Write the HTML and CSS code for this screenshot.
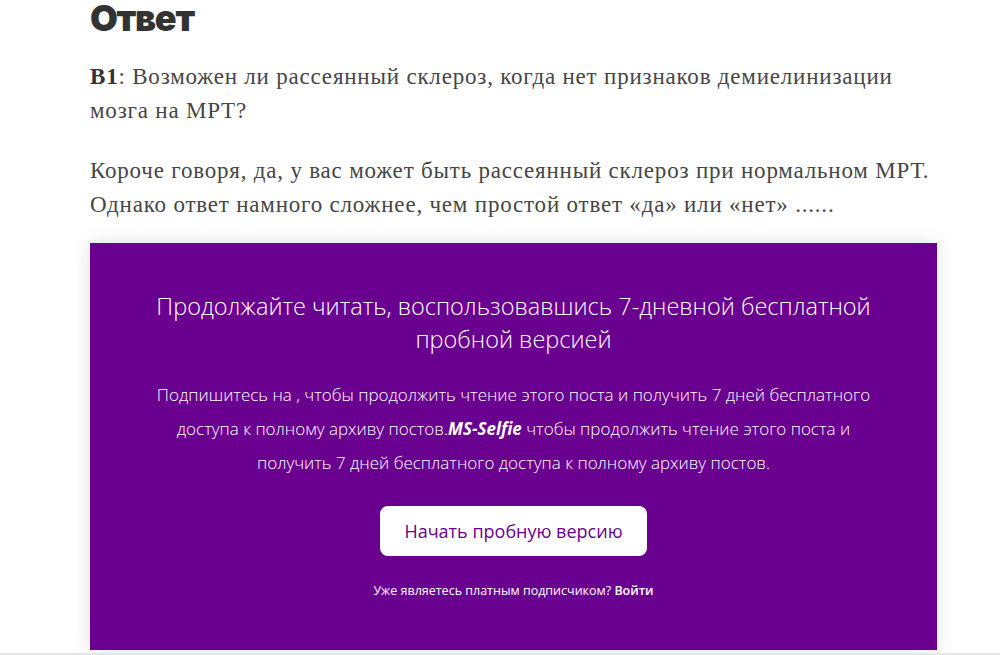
FILE: index.html
```html
<!DOCTYPE html>
<html lang="ru">
<head>
    <meta charset="UTF-8">
    <meta name="viewport" content="width=device-width, initial-scale=1.0">
    <title>Ответ</title>
    <link rel="stylesheet" href="styles.css">
</head>
<body>
    <div class="page">
        <article class="post">
            <h2>Ответ</h2>
            <p><strong>В1</strong>: Возможен ли рассеянный склероз, когда нет признаков демиелинизации мозга на МРТ?</p>
            <p class="teaser">Короче говоря, да, у вас может быть рассеянный склероз при нормальном МРТ. Однако ответ намного сложнее, чем простой ответ «да» или «нет» ......</p>
            <div class="paywall">
                <h3>Продолжайте читать, воспользовавшись 7-дневной бесплатной пробной версией</h3>
                <p class="paywall-text">Подпишитесь на , чтобы продолжить чтение этого поста и получить 7 дней бесплатного доступа к полному архиву постов.<b>MS-Selfie</b> чтобы продолжить чтение этого поста и получить 7 дней бесплатного доступа к полному архиву постов.</p>
                <a class="trial-btn" href="#">Начать пробную версию</a>
                <p class="login">Уже являетесь платным подписчиком? <a href="#">Войти</a></p>
            </div>
        </article>
    </div>
</body>
</html>
```

FILE: styles.css
```css
:root { --purple: #6a0090; --text: #464646; }
body { margin: 0; background: #fff; color: var(--text); }
.page { height: 653px; overflow: hidden; border-bottom: 2px solid #e6e6e6; }
.post { width: 847px; margin: 0 0 0 90px; font-family: "Liberation Serif", serif; font-size: 23px; letter-spacing: 0.8px; line-height: 34px; }
.post h2 { margin: -7px 0 0; font-family: Inter, sans-serif; font-weight: 900; font-size: 36px; letter-spacing: -1.3px; line-height: 50px; color: #333; }
.post p { margin: 10px 0 26px; }
.post h2 + p { margin-top: 17px; }
.post .teaser { margin-bottom: 21px; }
.post strong { color: #333; }
.paywall { margin-top: 0; padding: 47px 60px 49px; background: var(--purple); color: #fff; text-align: center; font-family: "Open Sans", sans-serif; letter-spacing: 0; box-shadow: 0 0 18px rgba(0,0,0,0.12); }
.paywall h3 { margin: 0 0 22px; font-weight: 300; font-size: 23.5px; line-height: 33px; }
.paywall .paywall-text { margin: 0 0 26px; font-size: 17px; line-height: 34px; font-weight: 300; }
.paywall-text b { font-weight: 700; font-style: italic; }
.trial-btn { display: inline-block; padding: 12px 24px; background: #fff; color: var(--purple); border-radius: 8px; text-decoration: none; font-size: 18px; line-height: 26px; font-weight: 500; }
.paywall .login { margin: 25px 0 0; font-size: 12.5px; line-height: 20px; }
.login a { color: #fff; text-decoration: none; font-weight: 600; }
```
